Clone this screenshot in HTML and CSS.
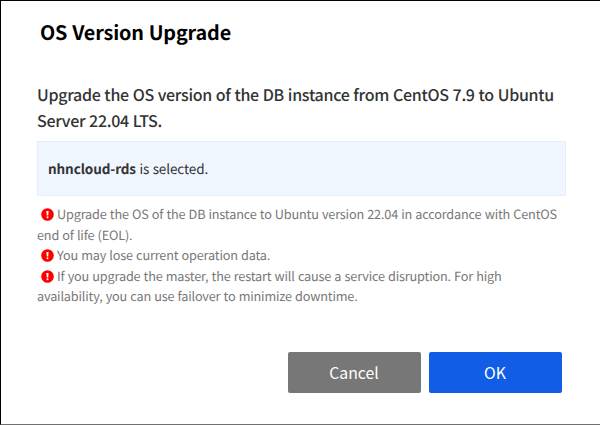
FILE: index.html
```html
<!DOCTYPE html>
<html lang="en">
<head>
<meta charset="utf-8">
<title>OS Version Upgrade</title>
<link rel="stylesheet" href="styles.css">
</head>
<body>
<main class="dialog">
<h1 class="title">OS Version Upgrade</h1>
<p class="lead">Upgrade the OS version of the DB instance from CentOS 7.9 to Ubuntu<br>Server 22.04 LTS.</p>
<div class="selected"><p><strong>nhncloud-rds</strong> is selected.</p></div>
<ul class="notes">
<li><svg class="icon" viewBox="0 0 13 13"><circle cx="6.5" cy="6.5" r="6.3"/><path d="M5.4 3h2.2l-.3 4.4H5.7z"/><circle class="dot" cx="6.5" cy="9.3" r="1"/></svg><span>Upgrade the OS of the DB instance to Ubuntu version 22.04 in accordance with CentOS</span><br><span>end of life (EOL).</span></li>
<li><svg class="icon" viewBox="0 0 13 13"><circle cx="6.5" cy="6.5" r="6.3"/><path d="M5.4 3h2.2l-.3 4.4H5.7z"/><circle class="dot" cx="6.5" cy="9.3" r="1"/></svg><span>You may lose current operation data.</span></li>
<li><svg class="icon" viewBox="0 0 13 13"><circle cx="6.5" cy="6.5" r="6.3"/><path d="M5.4 3h2.2l-.3 4.4H5.7z"/><circle class="dot" cx="6.5" cy="9.3" r="1"/></svg><span>If you upgrade the master, the restart will cause a service disruption. For high</span><br><span>availability, you can use failover to minimize downtime.</span></li>
</ul>
<div class="actions"><button class="cancel">Cancel</button><button class="ok">OK</button></div>
</main>
</body>
</html>
```
FILE: styles.css
```css
* { box-sizing: border-box; margin: 0; padding: 0; }
body { background: #fff; font-family: "Noto Sans CJK KR", "Noto Sans", sans-serif; text-rendering: geometricPrecision; }
.dialog { width: 600px; height: 425px; padding: 16px 34px 0 36px; border: 1px solid #000; border-right: 0; border-bottom-color: #707070; white-space: nowrap; }
.title { padding-left: 3px; font-size: 19.8px; font-weight: 700; line-height: 30px; letter-spacing: -0.14px; word-spacing: 0.5px; color: #000; }
.lead { margin-top: 34px; font-size: 16px; font-weight: 500; line-height: 26px; letter-spacing: -0.28px; word-spacing: 0.5px; color: #333; }
.selected { height: 55px; margin-top: 8px; padding-left: 10px; border: 1px solid #e5effa; background: #eff6ff; font-size: 13.5px; line-height: 53px; letter-spacing: -0.1px; word-spacing: 0.5px; color: #333; }
.notes { margin-top: 8px; list-style: none; font-size: 12.7px; line-height: 20.5px; letter-spacing: -0.17px; word-spacing: 0.5px; color: #777; }
.icon { width: 13px; height: 13px; margin: 0 3px 0 4px; vertical-align: -2px; fill: #f00; }
.icon path, .icon .dot { fill: #fff; }
.actions { display: flex; gap: 8px; margin: 45px 4.5px 0 0; justify-content: flex-end; }
button { width: 133px; height: 41px; border: 0; border-radius: 2px; font: 400 15.8px "Noto Sans CJK KR", sans-serif; color: #fff; }
.cancel { background: #777; }
.ok { background: #125de6; }
```
